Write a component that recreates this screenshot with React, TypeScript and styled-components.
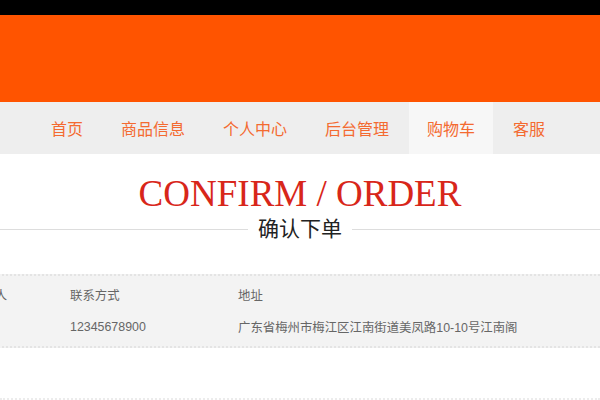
import React from "react";
import styled, { createGlobalStyle } from "styled-components";

const GlobalStyle = createGlobalStyle`
  html, body {
    margin: 0;
    padding: 0;
    background: #fff;
    overflow: hidden;
  }
  body {
    font-family: "Liberation Sans", "Noto Sans CJK SC", sans-serif;
  }
`;

const TopBar = styled.div`
  height: 15px;
  background: #000;
`;

const Banner = styled.header`
  height: 87px;
  background: #ff5400;
`;

const Nav = styled.nav`
  height: 52px;
  background: #eeeeee;
  display: flex;
  justify-content: center;
  gap: 2px;
  padding-right: 4px;
`;

const NavItem = styled.a<{ $active?: boolean }>`
  display: flex;
  align-items: center;
  padding: 0 18px;
  font-size: 16px;
  color: #f46a30;
  text-decoration: none;
  background: ${(p) => (p.$active ? "#f7f7f7" : "transparent")};
`;

const Heading = styled.section`
  padding-top: 20px;
  text-align: center;
`;

const Title = styled.h1`
  margin: 0;
  font-family: "Liberation Serif", serif;
  font-weight: normal;
  font-size: 37px;
  line-height: 40px;
  color: #d8261a;
`;

const SubTitle = styled.div`
  display: flex;
  align-items: center;
  margin-top: 1px;
  &::before,
  &::after {
    content: "";
    flex: 1;
    height: 1px;
    background: #dddddd;
  }
  span {
    padding: 0 10px;
    font-size: 21px;
    line-height: 28px;
    color: #222;
  }
`;

const Table = styled.div`
  margin-top: 31px;
  margin-left: -30px;
  background: #f3f3f3;
  border-top: 2px dotted #e4e4e4;
  border-bottom: 2px dotted #e4e4e4;
  padding: 3px 0 3px;
`;

const Row = styled.div`
  display: grid;
  grid-template-columns: 100px 168px 1fr;
  height: 32px;
  align-items: center;
  font-size: 12.4px;
  color: #666;
`;

const Cell = styled.div``;

const Footer = styled.div`
  margin-top: 50px;
  border-top: 2px dotted #ececec;
`;

const navItems = ["首页", "商品信息", "个人中心", "后台管理", "购物车", "客服"];

export default function App() {
  return (
    <>
      <GlobalStyle />
      <TopBar />
      <Banner />
      <Nav>
        {navItems.map((n) => (
          <NavItem key={n} $active={n === "购物车"}>
            {n}
          </NavItem>
        ))}
      </Nav>
      <Heading>
        <Title>CONFIRM / ORDER</Title>
        <SubTitle>
          <span>确认下单</span>
        </SubTitle>
      </Heading>
      <Table>
        <Row>
          <Cell>收货人</Cell>
          <Cell>联系方式</Cell>
          <Cell>地址</Cell>
        </Row>
        <Row>
          <Cell></Cell>
          <Cell>12345678900</Cell>
          <Cell>广东省梅州市梅江区江南街道美凤路10-10号江南阁</Cell>
        </Row>
      </Table>
      <Footer />
    </>
  );
}
